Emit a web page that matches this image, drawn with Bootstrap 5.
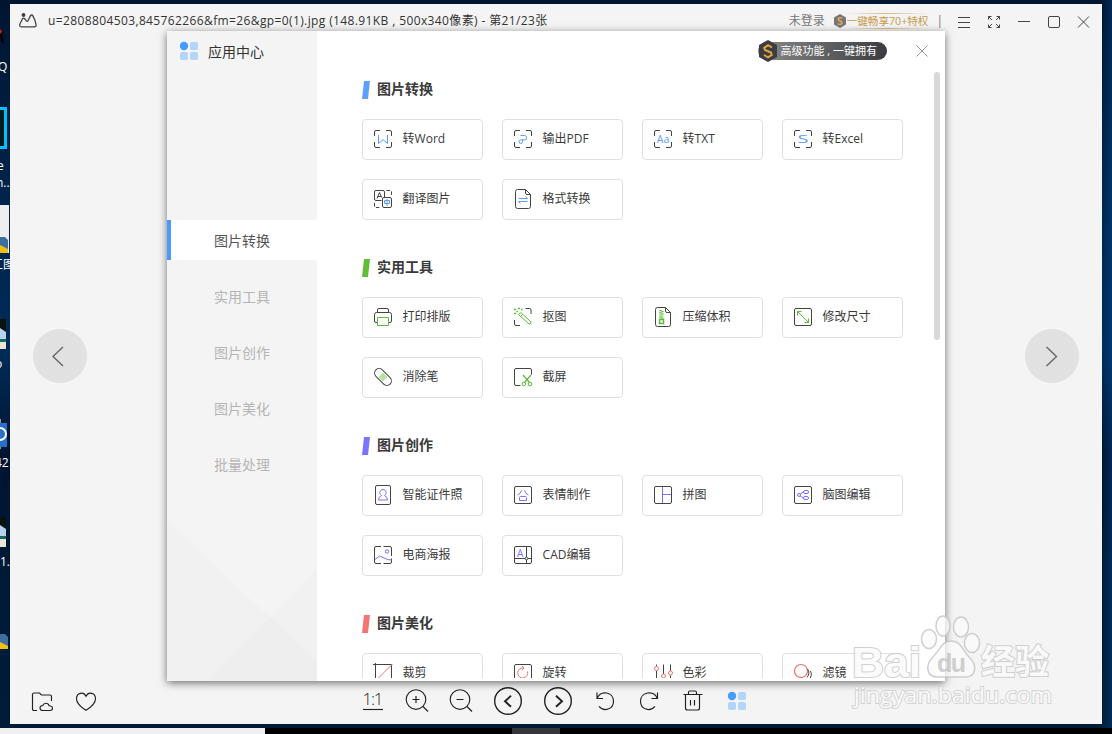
<!DOCTYPE html>
<html lang="zh-CN">
<head>
<meta charset="utf-8">
<title>应用中心</title>
<meta name="viewport" content="width=device-width, initial-scale=1">
<link rel="stylesheet" href="https://cdn.jsdelivr.net/npm/bootstrap@5.3.0/dist/css/bootstrap.min.css">
<style>
body{width:1112px;height:734px;overflow:hidden;color:#333;font:12px/1.5 "Open Sans","Noto Sans CJK SC",sans-serif}
svg{display:block;flex:none;fill:none;stroke:#444}
svg text{stroke:none;font-family:"Open Sans","Noto Sans CJK SC",sans-serif}
.desktop{width:1112px;height:734px;background:linear-gradient(90deg,transparent 99%,rgba(0,90,170,.3)),linear-gradient(#001530,#00234a 25%,#002b58 48%,#001431 62%,#001a38 80%,#001c38)}
.desk-icon{left:0;color:#fff;line-height:16px;white-space:nowrap}
.viewer{left:10px;top:4px;width:1092px;height:720px;background:#f4f4f4}
.titlebar{height:34px;padding:0 11px 0 9px}
.doc-name{margin-left:11px;white-space:nowrap;letter-spacing:.38px}
.vip{color:#c69a4c;font-size:10.6px;border-image:linear-gradient(90deg,transparent,#d9b87a,transparent) 1;border-width:1px 0;border-style:solid;line-height:14px;white-space:nowrap}
.stage-nav{padding:0 23px 4px}
.round-nav{width:54px;height:54px;background:#e1e1e1}
.toolbar{height:46px;padding-left:21px}
.left-tools{gap:19px;width:330px;padding-top:1px}
.tools{gap:20px}
.tools svg,.left-tools svg{stroke:#222;stroke-width:1.15}
.one-one{width:24px;height:24px}
.app-center{left:157px;top:27px;width:778px;height:650px;box-shadow:0 2px 8px rgba(0,0,0,.55)}
.side{width:150px;background:#f4f4f4}
.side-head{height:41px;padding:0 0 1px 12px;gap:9px;font-size:14px}
.side-list{padding-top:148px;gap:16px}
.side-list a{height:40px;font-size:14px;color:#b5b5b5;border-left:4px solid transparent;padding-right:4px}
.side-list a.active{background:#fff;border-color:#4a9bff;color:#555}
.main-head{height:50px;padding-right:16px;padding-bottom:10px}
.pro{height:18px;margin-right:28px;padding:0 10px 0 1px;gap:3px;border-radius:9px;background:linear-gradient(90deg,#8a8a8a,#3a3c40);color:#fff;font-size:11px;line-height:18px;white-space:nowrap}
.feed{height:597px;padding-left:45px}
.sect{margin-bottom:39px}
.sect-title{height:18px;font-size:14px;line-height:16px;font-weight:700;margin-bottom:20px;color:#3a3a3a}
.sect-title span{margin:-2px 0 0 7px}
.tick{width:8px;height:18px;clip-path:polygon(25% 0,100% 0,75% 100%,0 100%)}
.tiles{display:grid;grid-template-columns:repeat(4,121px);gap:19px}
.tile{height:41px;border:1px solid #e0e0e0;border-radius:4px;padding:0 0 1px 10px;gap:9.6px;white-space:nowrap;color:#3a3a3a}
.b .c{stroke:#5a9cf8}.b text{fill:#5a9cf8}.b .tick{background:#5fa0ff}
.g .c{stroke:#5dbb38}.g .tick{background:#62bd38}
.p .c{stroke:#7c70f6}.p text{fill:#7c70f6}.p .tick{background:#7d73ff}
.r .c{stroke:#f36f6f}.r .tick{background:#f57575}
.thumb{right:5px;top:41px;width:6px;height:268px;background:#d8d8d8}
.taskbar{left:0;top:728px;width:1112px;height:6px;background:#000}
.task-a{width:265px;background:#f0f0f0}.task-b{margin-left:247px;width:48px;background:#343638}
.mark-layer{left:845px;top:605px}
</style>
<script src="https://cdn.jsdelivr.net/npm/bootstrap@5.3.0/dist/js/bootstrap.bundle.min.js"></script>
</head>
<body>
<div class="desktop position-relative overflow-hidden">
  <svg class="position-absolute top-0 start-0" width="10" height="728" viewBox="0 0 10 728" style="stroke:none">
    <path d="M0 29l2 1 2 14-2-1-2-6z" fill="#000"/><path d="M0 29l2 2-1 3-1-1z" fill="#c22"/>
    <path d="M-20 108.500H5.500V147.500H-20z" fill="#001a20" stroke="#00c3f5" stroke-width="3"/>
    <path d="M0 205h9v48H0z" fill="#eee"/><path d="M0 237h5l3 3v13H0z" fill="#3f6f9e"/><path d="M0 245l8 4v4H0z" fill="#f3c012"/>
    <path d="M0 319h6v30H0z" fill="#08120e"/><path d="M0 328l6 4v8H0z" fill="#b7d3ef"/><path d="M0 339h6v3H0z" fill="#146b60"/><path d="M0 342h6v7H0z" fill="#ece5d8"/>
    <path d="M0 419h1v30H0z" fill="#999"/><path d="M0 423h7v24H0z" fill="#2870c8"/><circle cx="0" cy="434" r="6" stroke="#fff" stroke-width="2"/>
    <path d="M0 517h6v30H0z" fill="#08120e"/><path d="M0 525l6 4v8H0z" fill="#b7d3ef"/><path d="M0 536h6v3H0z" fill="#146b60"/><path d="M0 539h6v8H0z" fill="#ece5d8"/>
    <path d="M0 634h5l3 3v12H0z" fill="#3f6f9e"/><path d="M0 642l8 4v3H0z" fill="#f3c012"/>
  </svg>
  <span class="desk-icon position-absolute" style="top:59px;margin-left:-2px">Q</span>
  <span class="desk-icon position-absolute" style="top:158px;margin-left:-3px">e</span>
  <span class="desk-icon position-absolute" style="top:175px;margin-left:-4px">n...</span>
  <span class="desk-icon position-absolute" style="top:257px;margin-left:-9px">工图</span>
  <span class="desk-icon position-absolute" style="top:356px;margin-left:-5px">o</span>
  <span class="desk-icon position-absolute" style="top:455px;margin-left:-5px">42</span>
  <span class="desk-icon position-absolute" style="top:554px">1.</span>

  <section class="viewer position-absolute d-flex flex-column">
    <header class="titlebar d-flex align-items-center justify-content-between">
      <div class="d-flex align-items-center">
        <svg width="18" height="15" viewBox="0 0 18 15" stroke-width="1.300" style="margin-top:-2px"><path d="M3.300 6.200C2.500 8 .7 10.500.7 12.300c0 1 .6 1.500 1.500 1.500h13.100c1.400 0 2-.7 1.800-1.900-.4-3-1.600-6-3.200-9-.6-1.200-1.900-1.200-2.500 0L9 7.800c-.4.8-1.100.8-1.600.1C5.700 5.200 4.500 4.300 3.300 6.200z"/><circle cx="4.500" cy="2" r="1.300" fill="#333"/></svg>
        <span class="doc-name">u=2808804503,845762266&amp;fm=26&amp;gp=0(1).jpg (148.91KB , 500x340像素) - 第21/23张</span>
      </div>
      <div class="d-flex align-items-center">
        <span style="color:#777">未登录</span>
        <svg class="ms-2" width="14" height="14" viewBox="0 0 14 14" style="stroke:none"><path d="M7 0l6 3.500v7L7 14 1 10.500v-7z" fill="#777"/><text x="7" y="11" text-anchor="middle" font-size="10.500" font-weight="700" fill="#dfaa55">S</text></svg>
        <span class="vip">一键畅享70+特权</span>
        <span style="margin:0 6px 0 8px;color:#777">|</span>
        <svg width="150" height="20" viewBox="0 0 150 20" style="margin-right:-8px"><path d="M9 6.500h12M9 11.500h12M9 16.500h12M69 10.500h12M99.500 7q0-1.500 1.500-1.500h8q1.500 0 1.500 1.500v8q0 1.500-1.500 1.500h-8q-1.500 0-1.500-1.500zM129 5.500l11 11M140 5.500l-11 11"/><path d="M39.500 8.500V5.500h3M39.500 5.500l3.500 3.500M47.500 5.500h3v3M50.500 5.500L47 9M39.500 13.500v3h3M39.500 16.500L43 13M47.500 16.500h3v-3M50.500 16.500L47 13"/></svg>
      </div>
    </header>
    <div class="stage-nav flex-grow-1 d-flex align-items-center justify-content-between">
      <div class="round-nav rounded-circle d-flex align-items-center justify-content-center"><svg width="24" height="24" viewBox="0 0 24 24" style="stroke:#666" stroke-width="1.400"><path d="M15 3L5 12.500 15 22"/></svg></div>
      <div class="round-nav rounded-circle d-flex align-items-center justify-content-center"><svg width="24" height="24" viewBox="0 0 24 24" style="stroke:#666" stroke-width="1.400"><path d="M6.500 3l10 9.500-10 9.500"/></svg></div>
    </div>
    <footer class="toolbar d-flex align-items-center">
      <div class="left-tools d-flex">
        <svg width="24" height="24" viewBox="0 0 24 24"><path d="M6 20.500H3q-1.500 0-1.500-1.500V4.500Q1.500 3 3 3h5.500l2 2H19q1.500 0 1.500 1.500V11M12 20.500q-3 0-3-2.500c0-1.700 1.300-2.500 2.800-2.500 1-2.800 5.300-3.200 6.200.2 2 .1 3.500 1 3.500 2.600q0 2.200-2.500 2.200z"/></svg>
        <svg width="24" height="24" viewBox="0 0 24 24"><path d="M12 20.300C6 16.500 2.500 13 2.500 8.700c0-6 7-7.500 9.500-2.500 2.500-5 9.500-3.500 9.500 2.500 0 4.300-3.500 7.800-9.500 11.600z"/></svg>
      </div>
      <div class="tools d-flex align-items-center">
        <svg class="one-one" viewBox="0 0 24 24"><text x="12" y="16" text-anchor="middle" font-size="17" textLength="21" fill="#222" font-weight="300">1:1</text><path d="M2 20.500h20"/></svg>
        <svg width="24" height="24" viewBox="0 0 24 24"><circle cx="11" cy="10.500" r="9.800"/><path d="M18 17.500l5 5M11 7v7M7.500 10.500h7"/></svg>
        <svg width="24" height="24" viewBox="0 0 24 24"><circle cx="11" cy="10.500" r="9.800"/><path d="M18 17.500l5 5M7.500 10.500h7"/></svg>
        <svg width="30" height="30" viewBox="0 0 30 30"><circle cx="15" cy="15" r="13.300" stroke-width="1.400"/><path d="M18 9.800L12 15.300l6 5.500" stroke-width="1.900"/></svg>
        <svg width="30" height="30" viewBox="0 0 30 30"><circle cx="15" cy="15" r="13.300" stroke-width="1.400"/><path d="M13 9.800l6 5.500-6 5.500" stroke-width="1.900"/></svg>
        <svg width="24" height="24" viewBox="0 0 24 24"><path d="M4 3.500v6h6M4 9.500c4-9 16.500-6.500 16.500 2.800 0 8-9.500 11-14.500 5"/></svg>
        <svg width="24" height="24" viewBox="0 0 24 24"><path d="M20.500 3.500v6h-6M20.500 9.500C16.500.5 3.500 3 3.500 12.300c0 8 9.500 11 14.500 5"/></svg>
        <svg width="24" height="24" viewBox="0 0 24 24" stroke-width="1.300"><path d="M2.500 5.500h19M7.500 5V3.500Q7.500 2 9 2h5q1.500 0 1.500 1.500V5M4.500 5.500V19q0 2 2 2h10q2 0 2-2V5.500M9.500 11v5.500M13.500 11v5.500"/></svg>
        <svg width="24" height="24" viewBox="0 0 24 24" style="stroke:none"><circle cx="7" cy="7" r="4.200" fill="#459cff"/><g fill="#b1d5fb"><rect x="13" y="3" width="8" height="8" rx="1.800"/><rect x="3" y="13" width="8" height="8" rx="1.800"/><rect x="13" y="13" width="8" height="8" rx="1.800"/></g></svg>
      </div>
    </footer>

    <div class="app-center position-absolute bg-white d-flex">
      <nav class="side d-flex flex-column">
        <div class="side-head d-flex align-items-center">
          <svg width="20" height="20" viewBox="0 0 20 20" style="stroke:none"><circle cx="5" cy="5" r="4.200" fill="#459cff"/><g fill="#b1d5fb"><rect x="11" y="1" width="8" height="8" rx="1.800"/><rect x="1" y="11" width="8" height="8" rx="1.800"/><rect x="11" y="11" width="8" height="8" rx="1.800"/></g></svg>
          <span>应用中心</span>
        </div>
        <div class="side-list d-flex flex-column">
          <a class="active d-flex align-items-center justify-content-center text-decoration-none">图片转换</a>
          <a class="d-flex align-items-center justify-content-center text-decoration-none">实用工具</a>
          <a class="d-flex align-items-center justify-content-center text-decoration-none">图片创作</a>
          <a class="d-flex align-items-center justify-content-center text-decoration-none">图片美化</a>
          <a class="d-flex align-items-center justify-content-center text-decoration-none">批量处理</a>
        </div>
        <svg class="mt-auto" width="150" height="161" viewBox="0 0 150 161" style="stroke:none"><path d="M0 0l150 141v20H0z" fill="#000" fill-opacity=".013"/><path d="M150 49L40 161h110z" fill="#000" fill-opacity=".013"/></svg>
      </nav>
      <main class="flex-grow-1">
        <div class="main-head d-flex align-items-center justify-content-end">
          <div class="pro d-flex align-items-center">
            <svg width="18" height="22" viewBox="0 0 18 22" style="stroke:none"><path d="M9 0l9 5v12l-9 5-9-5V5z" fill="#3b3d42"/><path d="M13 7.500L9 5.200 5.200 7.800 6 10l6 2.500.7 2.500L9 17.300 5 15" stroke="#e6a23c" stroke-width="2"/></svg>
            <span>高级功能 , 一键拥有</span>
          </div>
          <svg width="14" height="14" viewBox="0 0 14 14" style="stroke:#999"><path d="M1.500 1.500l11 11M12.500 1.500l-11 11"/></svg>
        </div>
        <div class="feed overflow-hidden">
          <section class="sect b">
            <div class="sect-title d-flex align-items-center"><i class="tick"></i><span>图片转换</span></div>
            <div class="tiles">
              <div class="tile d-flex align-items-center"><svg width="20" height="20" viewBox="0 0 20 20"><path d="M1.500 7V3q0-1.500 1.500-1.500h4M13 1.500h4q1.500 0 1.500 1.500v4M18.500 13v4q0 1.500-1.500 1.500h-4M7 18.500H3q-1.500 0-1.500-1.500v-4"/><path class="c" d="M5.500 6v8.500L10 10.700l4.500 3.800V6"/></svg>转Word</div>
              <div class="tile d-flex align-items-center"><svg width="20" height="20" viewBox="0 0 20 20"><path d="M1.500 7V3q0-1.500 1.500-1.500h4M13 1.500h4q1.500 0 1.500 1.500v4M18.500 13v4q0 1.500-1.500 1.500h-4M7 18.500H3q-1.500 0-1.500-1.500v-4"/><path class="c" d="M7.500 6.500h4a2.200 2.200 0 0 1 0 4.400H7.600a1.800 1.800 0 1 0 1.900 1.800v-2"/></svg>输出PDF</div>
              <div class="tile d-flex align-items-center"><svg width="20" height="20" viewBox="0 0 20 20"><path d="M1.500 7V3q0-1.500 1.500-1.500h4M13 1.500h4q1.500 0 1.500 1.500v4M18.500 13v4q0 1.500-1.500 1.500h-4M7 18.500H3q-1.500 0-1.500-1.500v-4"/><text x="10" y="14" font-size="10.500" text-anchor="middle" textLength="12.500">Aa</text></svg>转TXT</div>
              <div class="tile d-flex align-items-center"><svg width="20" height="20" viewBox="0 0 20 20"><path d="M1.500 7V3q0-1.500 1.500-1.500h4M13 1.500h4q1.500 0 1.500 1.500v4M18.500 13v4q0 1.500-1.500 1.500h-4M7 18.500H3q-1.500 0-1.500-1.500v-4"/><text x="4.500" y="14" font-size="11" textLength="11" lengthAdjust="spacingAndGlyphs">S</text></svg>转Excel</div>
              <div class="tile d-flex align-items-center"><svg width="20" height="20" viewBox="0 0 20 20"><path d="M8.500 11.500H3q-1.500 0-1.500-1.500V3Q1.500 1.500 3 1.500h7q1.500 0 1.500 1.500v5M4 9.500l2.500-6 2.300 5M4.800 7.500h3.400M11 8.500h6q1.500 0 1.500 1.500v7q0 1.500-1.500 1.500h-6q-1.500 0-1.500-1.500v-7q0-1.500 1.500-1.500z"/><path d="M13.500 1.500H17q1.500 0 1.500 1.500v3.500M1.500 14v3q0 1.500 1.500 1.500h4" stroke-dasharray="3.500 1.500"/><path class="c" d="M11.500 11.500h5v3h-5zM14 10v7"/></svg>翻译图片</div>
              <div class="tile d-flex align-items-center"><svg width="20" height="20" viewBox="0 0 20 20"><path d="M12.500.5h-8q-2 0-2 2v15q0 2 2 2h11q2 0 2-2V5.500l-5-5v3.500q0 1.500 1.500 1.500h3.500"/><path class="c" d="M5.500 9.500h9l-2-2M14.500 12.500h-9l2 2"/></svg>格式转换</div>
            </div>
          </section>
          <section class="sect g">
            <div class="sect-title d-flex align-items-center"><i class="tick"></i><span>实用工具</span></div>
            <div class="tiles">
              <div class="tile d-flex align-items-center"><svg width="20" height="20" viewBox="0 0 20 20"><path d="M4.500 5.500V3q0-1.500 1.500-1.500h8q1.500 0 1.500 1.500v2.500M4.500 15.500H3q-1.500 0-1.500-1.500V7.500q0-2 2-2h13q2 0 2 2V14q0 1.500-1.500 1.500h-1.500"/><path class="c" d="M4.500 10.500h11v8h-11z"/></svg>打印排版</div>
              <div class="tile d-flex align-items-center"><svg width="20" height="20" viewBox="0 0 20 20"><path d="M12.500 1.500h4q1.500 0 1.500 1.500v4M7 18.500H3q-1.500 0-1.500-1.500v-4"/><path class="c" d="M5.500 7.500q1-2 3-1.500l9.500 9q.5 2-2 2zM7.500 9.500l2-2"/><path class="c" d="M1 2.500h2M5 1.500h2M8 2.500h1.500M1 6.500h2M3.500 4.500h1.500" stroke-width="1.300"/></svg>抠图</div>
              <div class="tile d-flex align-items-center"><svg width="20" height="20" viewBox="0 0 20 20"><path d="M12.500.5h-8q-2 0-2 2v15q0 2 2 2h11q2 0 2-2V5.500l-5-5v3.500q0 1.500 1.500 1.500h3.500"/><path class="c" d="M7.500 3v9" stroke-width="2.500" stroke-dasharray="1.200 1"/><path class="c" d="M9.500 4v9" stroke-width="2" stroke-dasharray="1.200 1"/><path class="c" d="M6.500 12.500h4v4h-4z" stroke-width="1.500"/></svg>压缩体积</div>
              <div class="tile d-flex align-items-center"><svg width="20" height="20" viewBox="0 0 20 20"><rect x="1.500" y="1.500" width="17" height="17" rx="1.500"/><path class="c" d="M4.500 8.500v-4h4M4.500 4.500l11 11M11.500 15.500h4v-4"/></svg>修改尺寸</div>
              <div class="tile d-flex align-items-center"><svg width="20" height="20" viewBox="0 0 20 20"><path d="M10 5.500l4.500 4.500-4.500 4.500L5.500 10z" fill="#b5e3a3" style="stroke:none"/><rect x="0" y="5.500" width="20" height="9" rx="4.500" transform="rotate(45 10 10)"/></svg>消除笔</div>
              <div class="tile d-flex align-items-center"><svg width="20" height="20" viewBox="0 0 20 20"><path d="M7.500 18.500H3q-1.500 0-1.500-1.500V3Q1.500 1.500 3 1.500h14q1.500 0 1.500 1.500v4.500"/><path class="c" d="M10 8l6.500 7.500M18 8l-6.500 7.500" stroke-width="1.200"/><circle class="c" cx="10.800" cy="17" r="1.800"/><circle class="c" cx="17" cy="17" r="1.800"/></svg>截屏</div>
            </div>
          </section>
          <section class="sect p">
            <div class="sect-title d-flex align-items-center"><i class="tick"></i><span>图片创作</span></div>
            <div class="tiles">
              <div class="tile d-flex align-items-center"><svg width="20" height="20" viewBox="0 0 20 20"><rect x="2.500" y=".5" width="15" height="19" rx="1.500"/><path class="c" d="M8.500 10.500c-3-2-1.500-6 1.500-6s4.500 4 1.500 6q3 1 3 4.500h-9q0-3.500 3-4.500z"/></svg>智能证件照</div>
              <div class="tile d-flex align-items-center"><svg width="20" height="20" viewBox="0 0 20 20"><rect x="1.500" y="1.500" width="17" height="17" rx="1.500"/><path class="c" d="M8.500 5.500q-1 3.500-4 4.500M11.500 5.500q1 3.500 4 4.500M7.500 11.500h5q1 0 1 1v3h-7v-3q0-1 1-1z"/></svg>表情制作</div>
              <div class="tile d-flex align-items-center"><svg width="20" height="20" viewBox="0 0 20 20"><path class="c" d="M9.500 1.500v17M9.500 9.500h9"/><rect x="1.500" y="1.500" width="17" height="17" rx="1.500"/></svg>拼图</div>
              <div class="tile d-flex align-items-center"><svg width="20" height="20" viewBox="0 0 20 20"><rect x="1.500" y="1.500" width="17" height="17" rx="1.500"/><circle class="c" cx="6" cy="10" r="1.500"/><path class="c" d="M7.200 9l3.300-2M7.200 11l3.300 2"/><rect class="c" x="10.500" y="5.500" width="5" height="3" rx="1.500"/><rect class="c" x="10.500" y="11.500" width="5" height="3" rx="1.500"/></svg>脑图编辑</div>
              <div class="tile d-flex align-items-center"><svg width="20" height="20" viewBox="0 0 20 20"><path d="M8 1.500H3Q1.500 1.500 1.500 3v14q0 1.500 1.500 1.500h5M10.500 1.500H17q1.500 0 1.500 1.500v8M18.500 13.500V17q0 1.500-1.500 1.500h-6.500"/><circle class="c" cx="14" cy="6.500" r="1.700"/><path class="c" d="M2 14.500l4.500-3.500 8 3.500 4 .5"/></svg>电商海报</div>
              <div class="tile d-flex align-items-center"><svg width="20" height="20" viewBox="0 0 20 20"><rect x="1.500" y="1.500" width="17" height="17" rx="1.500"/><path d="M13.500 1.500v17M1.500 13.500h17"/><circle cx="13.500" cy="13.500" r="1.400" fill="#fff"/><text x="4" y="11.500" font-size="10">A</text></svg>CAD编辑</div>
            </div>
          </section>
          <section class="sect r">
            <div class="sect-title d-flex align-items-center"><i class="tick"></i><span>图片美化</span></div>
            <div class="tiles">
              <div class="tile d-flex align-items-center"><svg width="20" height="20" viewBox="0 0 20 20"><path d="M0 1.500h18.500V20M2.500-.5V20"/><path class="c" d="M2 18.500L19.500 1"/></svg>裁剪</div>
              <div class="tile d-flex align-items-center"><svg width="20" height="20" viewBox="0 0 20 20"><rect x="1.500" y="1.500" width="17" height="17" rx="1.500"/><path class="c" d="M14.500 8.500a5 5 0 1 1-4-3.500M9 3l2 2-2 2.500"/></svg>旋转</div>
              <div class="tile d-flex align-items-center"><svg width="20" height="20" viewBox="0 0 20 20"><path d="M3.500 1.500v1.500M3.500 8v11M10.500 1.500V11M17.500 1.500V8M17.500 12.500V19"/><circle class="c" cx="3.500" cy="5.500" r="2"/><circle class="c" cx="10.500" cy="13" r="2"/><circle class="c" cx="17.500" cy="10" r="2"/></svg>色彩</div>
              <div class="tile d-flex align-items-center"><svg width="20" height="20" viewBox="0 0 20 20"><circle class="c" cx="8" cy="8" r="6.500" stroke-width="1.200"/><path d="M14.500 6q3 4-.5 8.500M17.500 8q2.500 5-2.500 9.500"/></svg>滤镜</div>
            </div>
          </section>
        </div>
      </main>
      <div class="thumb position-absolute rounded-pill"></div>
    </div>
  </section>

  <div class="taskbar position-absolute d-flex"><div class="task-a"></div><div class="task-b"></div></div>

  <svg class="mark-layer position-absolute pe-none" width="220" height="120" viewBox="0 0 220 120" style="stroke:#c8c8c8;opacity:.85" stroke-width="1.500">
    <g fill="#fbfbfb" fill-opacity=".85">
      <ellipse cx="84" cy="34" rx="7.500" ry="9.500"/><ellipse cx="98" cy="21" rx="7" ry="10"/><ellipse cx="116" cy="22" rx="7.500" ry="10"/><ellipse cx="127" cy="38" rx="7.500" ry="9.500"/>
      <path d="M106 36c10 0 12 10 18 16 9 9 7 20-4 20H93c-12 0-13-12-5-20 7-7 9-16 18-16z"/>
    </g>
    <g fill="#fbfbfb" style="paint-order:stroke" font-weight="700">
      <text x="7" y="72" font-size="43" textLength="69" lengthAdjust="spacingAndGlyphs" style="font-family:'Liberation Sans',sans-serif;stroke:#c9c9c9;stroke-width:2px">Bai</text>
      <text x="92" y="67" font-size="25" textLength="29" style="font-family:'Liberation Sans',sans-serif;fill:#c8c8c8">du</text>
      <text x="136" y="69" font-size="34" textLength="68" style="stroke:#c9c9c9;stroke-width:2px">经验</text>
      <text x="9" y="98" font-size="22.500" font-weight="400" textLength="198" lengthAdjust="spacingAndGlyphs" style="stroke:#cfcfcf;stroke-width:2px">jingyan.baidu.com</text>
    </g>
  </svg>
</div>
</body>
</html>
